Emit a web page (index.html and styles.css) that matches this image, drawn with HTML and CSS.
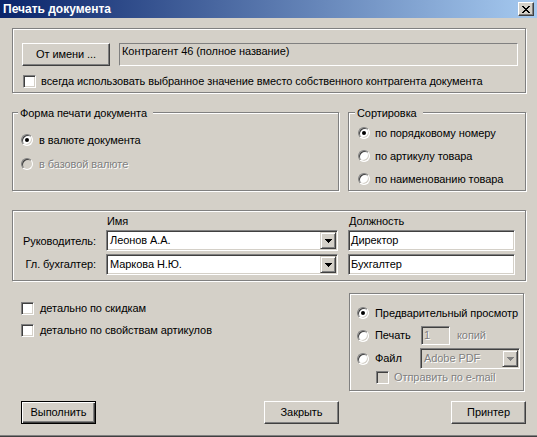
FILE: index.html
```html
<!DOCTYPE html>
<html lang="ru">
<head>
<meta charset="utf-8">
<title>Печать документа</title>
<link rel="stylesheet" href="styles.css">
</head>
<body>
<div class="window">
  <div class="titlebar">
    <span class="title">Печать документа</span>
    <span class="close-btn">
      <svg width="8" height="7" viewBox="0 0 8 7" shape-rendering="crispEdges">
        <rect x="0" y="0" width="2" height="1"/><rect x="6" y="0" width="2" height="1"/>
        <rect x="1" y="1" width="2" height="1"/><rect x="5" y="1" width="2" height="1"/>
        <rect x="2" y="2" width="4" height="1"/>
        <rect x="3" y="3" width="2" height="1"/>
        <rect x="2" y="4" width="4" height="1"/>
        <rect x="1" y="5" width="2" height="1"/><rect x="5" y="5" width="2" height="1"/>
        <rect x="0" y="6" width="2" height="1"/><rect x="6" y="6" width="2" height="1"/>
      </svg>
    </span>
  </div>
  <div class="client">
    <div class="group g-sender">
      <div class="sender-row">
        <div class="btn btn-sender">От имени ...</div>
        <div class="static-field">Контрагент 46 (полное название)</div>
      </div>
      <div class="check-row sender-check">
        <span class="checkbox"></span>
        <span class="check-label">всегда использовать выбранное значение вместо собственного контрагента документа</span>
      </div>
    </div>

    <div class="row-forms">
      <div class="group g-form">
        <span class="legend legend-form">Форма печати документа</span>
        <div class="radio-row form-r1"><span class="radio on"></span><span class="radio-label">в валюте документа</span></div>
        <div class="radio-row form-r2"><span class="radio disabled"></span><span class="radio-label disabled-text">в базовой валюте</span></div>
      </div>
      <div class="group g-sort">
        <span class="legend legend-sort">Сортировка</span>
        <div class="radio-row sort-r1"><span class="radio on"></span><span class="radio-label">по порядковому номеру</span></div>
        <div class="radio-row sort-r"><span class="radio"></span><span class="radio-label">по артикулу товара</span></div>
        <div class="radio-row sort-r"><span class="radio"></span><span class="radio-label">по наименованию товара</span></div>
      </div>
    </div>

    <div class="group g-persons">
      <div class="persons-grid">
        <span></span>
        <span class="col-head">Имя</span>
        <span class="col-head">Должность</span>

        <span class="person-label">Руководитель:</span>
        <div class="combo">
          <span class="combo-text">Леонов А.А.</span>
          <span class="combo-btn"><svg width="7" height="4" viewBox="0 0 7 4" shape-rendering="crispEdges"><rect x="0" y="0" width="7" height="1"/><rect x="1" y="1" width="5" height="1"/><rect x="2" y="2" width="3" height="1"/><rect x="3" y="3" width="1" height="1"/></svg></span>
        </div>
        <div class="field"><span class="field-text">Директор</span></div>

        <span class="person-label">Гл. бухгалтер:</span>
        <div class="combo">
          <span class="combo-text">Маркова Н.Ю.</span>
          <span class="combo-btn"><svg width="7" height="4" viewBox="0 0 7 4" shape-rendering="crispEdges"><rect x="0" y="0" width="7" height="1"/><rect x="1" y="1" width="5" height="1"/><rect x="2" y="2" width="3" height="1"/><rect x="3" y="3" width="1" height="1"/></svg></span>
        </div>
        <div class="field"><span class="field-text">Бухгалтер</span></div>
      </div>
    </div>

    <div class="row-options">
      <div class="checks">
        <div class="check-row opt-check1"><span class="checkbox"></span><span class="check-label">детально по скидкам</span></div>
        <div class="check-row opt-check2"><span class="checkbox"></span><span class="check-label">детально по свойствам артикулов</span></div>
      </div>
      <div class="group g-output">
        <div class="out-row out-r1"><span class="radio on"></span><span class="radio-label">Предварительный просмотр</span></div>
        <div class="out-row out-r2">
          <span class="radio"></span><span class="radio-label out-label">Печать</span>
          <div class="field field-disabled copies"><span class="field-text disabled-text">1</span></div>
          <span class="disabled-text copies-label">копий</span>
        </div>
        <div class="out-row out-r3">
          <span class="radio"></span><span class="radio-label out-label out-label-file">Файл</span>
          <div class="combo combo-disabled">
            <span class="combo-text disabled-text">Adobe PDF</span>
            <span class="combo-btn"><svg width="7" height="4" viewBox="0 0 7 4" shape-rendering="crispEdges" fill="#808080"><rect x="0" y="0" width="7" height="1"/><rect x="1" y="1" width="5" height="1"/><rect x="2" y="2" width="3" height="1"/><rect x="3" y="3" width="1" height="1"/></svg></span>
          </div>
        </div>
        <div class="check-row out-check"><span class="checkbox disabled"></span><span class="check-label disabled-text">Отправить по e-mail</span></div>
      </div>
    </div>

    <div class="row-buttons">
      <div class="btn btn-default btn-run">Выполнить</div>
      <div class="btn btn-close">Закрыть</div>
      <div class="btn btn-printer">Принтер</div>
    </div>
  </div>
</div>
</body>
</html>
```

FILE: styles.css
```css
* { box-sizing: border-box; }
html, body { margin: 0; padding: 0; }
body {
  font-family: "Liberation Sans", Arial, sans-serif;
  font-size: 11px;
  line-height: 13px;
  letter-spacing: -0.07px;
  color: #000;
  background: #D4D0C8;
}
.window {
  width: 537px;
  height: 437px;
  background: #D4D0C8;
  border-bottom: 1px solid #404040;
  box-shadow: inset 0 -1px 0 #808080;
  display: flex;
  flex-direction: column;
  overflow: hidden;
}

/* title bar */
.titlebar {
  height: 18px;
  background: linear-gradient(to right, #0A246A, #A6CAF0);
  display: flex;
  align-items: center;
  justify-content: space-between;
  padding: 0 3px 0 3px;
}
.title {
  color: #fff;
  font-weight: bold;
  font-size: 12px;
  letter-spacing: 0;
}
.close-btn {
  width: 16px;
  height: 14px;
  background: #D4D0C8;
  border: 1px solid;
  border-color: #fff #404040 #404040 #fff;
  box-shadow: inset -1px -1px 0 #808080;
  display: flex;
  align-items: center;
  justify-content: center;
}
.close-btn svg { fill: #000; display: block; margin-left: -1px; }

.client {
  padding-left: 12px;
  display: flex;
  flex-direction: column;
}

/* etched group */
.group {
  position: relative;
  border: 1px solid #808080;
  box-shadow: inset 1px 1px 0 #fff, 1px 1px 0 #fff;
}
.legend {
  position: absolute;
  top: -6px;
  background: #D4D0C8;
  white-space: nowrap;
}
.legend-form { left: 5px; padding: 0 6px 0 2px; }
.legend-sort { left: 6px; padding: 0 6px 0 2px; }

/* controls */
.btn {
  height: 23px;
  background: #D4D0C8;
  border: 1px solid;
  border-color: #fff #404040 #404040 #fff;
  box-shadow: inset -1px -1px 0 #808080;
  display: flex;
  align-items: center;
  justify-content: center;
  white-space: nowrap;
}
.btn-default {
  border: 1px solid #000;
  box-shadow: inset 1px 1px 0 #fff, inset -1px -1px 0 #404040, inset -2px -2px 0 #808080;
}
.field {
  height: 21px;
  background: #fff;
  border: 1px solid;
  border-color: #808080 #fff #fff #808080;
  box-shadow: inset 1px 1px 0 #404040, inset -1px -1px 0 #D4D0C8;
  display: flex;
  align-items: center;
  padding: 0 2px;
}
.field-disabled { background: #D4D0C8; }
.static-field {
  height: 23px;
  background: #D4D0C8;
  border: 1px solid;
  border-color: #808080 #fff #fff #808080;
  padding: 1px 0 0 2px;
  white-space: nowrap;
}
.combo {
  height: 21px;
  background: #fff;
  border: 1px solid;
  border-color: #808080 #fff #fff #808080;
  box-shadow: inset 1px 1px 0 #404040, inset -1px -1px 0 #D4D0C8;
  display: flex;
  align-items: center;
  padding: 1px;
}
.combo-disabled { background: #D4D0C8; }
.combo-text {
  flex: 1;
  padding-left: 2px;
  white-space: nowrap;
  overflow: hidden;
}
.combo-btn {
  width: 16px;
  height: 17px;
  background: #D4D0C8;
  border: 1px solid;
  border-color: #D4D0C8 #404040 #404040 #D4D0C8;
  box-shadow: inset 1px 1px 0 #fff, inset -1px -1px 0 #808080;
  display: flex;
  align-items: center;
  justify-content: center;
}
.combo-btn svg { display: block; fill: #000; }
.combo-disabled .combo-btn svg { fill: #808080; }

.radio {
  position: relative;
  flex: none;
  width: 12px;
  height: 12px;
  border-radius: 50%;
  background: #fff;
  border: 1px solid;
  border-color: #808080 #fff #fff #808080;
  box-shadow: inset 1px 1px 0 #404040, inset -1px -1px 0 #D4D0C8;
}
.radio.disabled { background: #D4D0C8; }
.radio.on::after {
  content: "";
  position: absolute;
  left: 3px;
  top: 3px;
  width: 4px;
  height: 4px;
  border-radius: 50%;
  background: #000;
}
.checkbox {
  flex: none;
  width: 13px;
  height: 13px;
  background: #fff;
  border: 1px solid;
  border-color: #808080 #fff #fff #808080;
  box-shadow: inset 1px 1px 0 #404040, inset -1px -1px 0 #D4D0C8;
}
.checkbox.disabled { background: #D4D0C8; }
.disabled-text { color: #808080; text-shadow: 1px 1px 0 #fff; }

.radio-row, .check-row, .out-row {
  display: flex;
  align-items: center;
  white-space: nowrap;
}
.radio-row { height: 16px; }
.check-row { height: 13px; }
.radio-label { margin-left: 5px; }
.check-label { margin-left: 5px; }

/* group 1 */
.g-sender {
  margin-top: 10px;
  width: 514px;
  height: 65px;
}
.sender-row {
  display: flex;
  margin-top: 14px;
  padding-left: 9px;
}
.btn-sender { width: 88px; }
.static-field { width: 399px; margin-left: 9px; }
.sender-check { margin-top: 9px; padding-left: 10px; }

/* forms row */
.row-forms {
  display: flex;
  margin-top: 19px;
}
.g-form { width: 327px; height: 79px; padding-left: 8px; }
.g-sort { width: 178px; height: 79px; margin-left: 9px; padding-left: 9px; }
.form-r1 { margin-top: 19px; }
.form-r2 { margin-top: 8px; }
.g-form .radio-label { margin-left: 6px; }
.sort-r1 { margin-top: 12px; }
.sort-r { margin-top: 7px; }

/* persons */
.g-persons {
  margin-top: 19px;
  width: 514px;
  height: 71px;
}
.persons-grid {
  display: grid;
  grid-template-columns: 83px 232px 167px;
  grid-template-rows: 13px 21px 21px;
  column-gap: 10px;
  row-gap: 2px;
  padding-top: 4px;
}
.persons-grid > :nth-child(n+7) { margin-top: 1px; }
.col-head { padding-left: 1px; }
.person-label {
  text-align: right;
  align-self: center;
  padding-top: 1px;
}

/* options */
.row-options {
  display: flex;
  margin-top: 12px;
}
.checks {
  width: 337px;
  padding-left: 9px;
}
.opt-check1 { margin-top: 9px; }
.opt-check2 { margin-top: 9px; }
.opt-check1 .checkbox, .opt-check2 .checkbox { margin-right: 1px; }
.g-output {
  width: 175px;
  height: 98px;
  padding-left: 7px;
}
.out-r1 { height: 16px; margin-top: 11px; }
.out-r2 { height: 19px; margin-top: 5px; }
.out-r3 { height: 21px; margin-top: 3px; }
.g-output .radio-label { margin-left: 6px; }
.out-label { width: 46px; }
.out-label-file { width: 45px; }
.copies { width: 29px; height: 19px; }
.copies-label { margin-left: 7px; }
.combo-disabled { width: 100px; }
.out-check { margin-top: 2px; padding-left: 19px; }

/* buttons */
.row-buttons {
  display: flex;
  margin-top: 10px;
}
.btn-run { width: 75px; margin-left: 9px; }
.btn-close { width: 75px; margin-left: 168px; }
.btn-printer { width: 75px; margin-left: 112px; }
```
